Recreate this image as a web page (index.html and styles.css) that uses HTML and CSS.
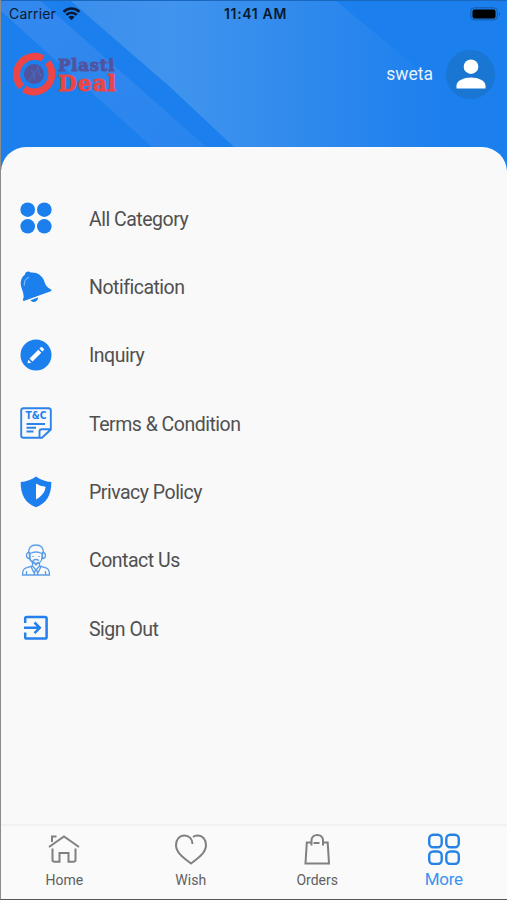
FILE: index.html
```html
<!DOCTYPE html>
<html lang="en">
<head>
  <meta charset="UTF-8">
  <meta name="viewport" content="width=device-width, initial-scale=1.0">
  <title>Plasti Deal</title>
  <link rel="stylesheet" href="styles.css">
</head>
<body>
  <div class="phone">
    <header class="header">
      <svg class="header-bg" viewBox="0 0 507 170" preserveAspectRatio="none">
        <defs>
          <linearGradient id="band" x1="0" y1="0" x2="1" y2="0.8">
            <stop offset="0" stop-color="#3489ee"/>
            <stop offset="1" stop-color="#2885ee"/>
          </linearGradient>
          <linearGradient id="sheen" gradientUnits="userSpaceOnUse" x1="80" y1="0" x2="450" y2="0">
            <stop offset="0" stop-color="#3c90ed"/>
            <stop offset="0.25" stop-color="#4094ed"/>
            <stop offset="0.7" stop-color="#2b87ed"/>
            <stop offset="1" stop-color="#1b7fee"/>
          </linearGradient>
        </defs>
        <path d="M0 0H40L224 163L207 170H177L0 10z" fill="url(#band)"/>
        <path d="M70 0H336L432 80L507 145V170H258L170 87z" fill="url(#sheen)"/>
      </svg>

      <div class="status-bar">
        <div class="carrier">
          <span>Carrier</span>
          <svg width="19" height="14" viewBox="0 0 19 14">
            <path d="M1.600 4.800a11.200 11.200 0 0 1 15.800 0M4.300 7.900a7.300 7.300 0 0 1 10.400 0" fill="none" stroke="#0a1a30" stroke-width="2.600"/>
            <path d="M6.400 10.100a4.400 4.400 0 0 1 6.200 0L9.500 13.300z" fill="#0a1a30"/>
          </svg>
        </div>
        <span class="clock">11:41 AM</span>
        <svg class="battery" width="32" height="14" viewBox="0 0 32 14">
          <rect x=".8" y=".8" width="26.500" height="12" rx="3.500" fill="none" stroke="#1759a4"/>
          <rect x="2.500" y="2.500" width="23" height="9" rx="2" fill="#000"/>
          <path d="M29 5v4q2-2 0-4" fill="#1759a4"/>
        </svg>
      </div>

      <div class="top-row">
        <div class="logo">
          <svg width="44" height="44" viewBox="0 0 44 44">
            <g fill="none" stroke="#ed4546" stroke-width="7">
              <path d="M31 6.500A18 18 0 0 0 9.500 34.800"/>
              <path d="M12 37A18 18 0 0 0 35.500 10.200"/>
            </g>
            <circle cx="22" cy="22" r="10" fill="#51539f"/>
            <path d="M17 29l6-9 3-5 1 6 3 3M19 18l4 4-1 7" fill="none" stroke="#4a68b4" stroke-width="1.300"/>
          </svg>
          <div class="logo-text">
            <span class="logo-plasti">Plasti</span>
            <span class="logo-deal">Deal</span>
          </div>
        </div>
        <div class="user">
          <span>sweta</span>
          <div class="avatar">
            <svg width="30" height="30" viewBox="0 0 30 30" fill="#fff">
              <circle cx="15" cy="7.700" r="7.300"/>
              <path d="M.5 29.500V26.500C.5 21.500 8 18.500 15 18.500S29.500 21.500 29.500 26.500V29.500z"/>
            </svg>
          </div>
        </div>
      </div>
    </header>

    <main class="sheet">
      <ul class="menu">
        <li class="menu-item">
          <svg class="menu-icon" viewBox="0 0 32 32">
            <circle cx="7.700" cy="7.700" r="7.300"/><circle cx="24.300" cy="7.700" r="7.300"/>
            <circle cx="7.700" cy="24.300" r="7.300"/><circle cx="24.300" cy="24.300" r="7.300"/>
          </svg>
          <span>All Category</span>
        </li>
        <li class="menu-item">
          <svg class="menu-icon" viewBox="0 0 32 32">
            <path d="M5 3.500C5 1 8.500-.5 10.700 1.600C17 1 22 4.500 24 9.500C25.500 13.500 26 16 31 18.500C31.800 19 31.500 20 30.800 20.300L4.500 29.800C3 30.200 2.500 29 3.200 27.800C5 23 1 18 .7 13C.5 9 2 5.800 5 3.500z"/>
            <path d="M10.500 29.300L18 26.500C18.500 30 13 33 10.500 29.300z"/>
            <path d="M4.300 14.500C3.900 10.500 5.500 7.500 9 6.300" fill="none" stroke="#a9cff8" stroke-width=".9"/>
          </svg>
          <span>Notification</span>
        </li>
        <li class="menu-item">
          <svg class="menu-icon" viewBox="0 0 32 32">
            <circle cx="16" cy="16" r="15.500"/>
            <path d="M8.300 20.700L11.300 23.700L8 24.300Q7.300 24.300 7.600 23.500zM9.500 19.500L18.300 10.700L21.300 13.700L12.500 22.500zM19.400 9.600L20.800 8.200Q21.500 7.700 22.200 8.300L23.700 9.800Q24.200 10.500 23.700 11.300L22.400 12.600z" fill="#fff"/>
          </svg>
          <span>Inquiry</span>
        </li>
        <li class="menu-item">
          <svg class="menu-icon" viewBox="0 0 32 32">
            <path d="M19.500 30.800H3.500Q1.200 30.800 1.200 28.500V3.500Q1.200 1.200 3.500 1.200H28.500Q30.800 1.200 30.800 3.500V22.500L22 30.800H19.500V24.500Q19.500 22.300 22 22.300H30.500M6.500 17H25M6.500 20.800H16M6.500 24.500H13.500" fill="none" stroke="#2c83e9" stroke-width="1.900"/>
            <text x="5.500" y="12.300" textLength="21" lengthAdjust="spacingAndGlyphs" class="tc-text">T&amp;C</text>
          </svg>
          <span>Terms &amp; Condition</span>
        </li>
        <li class="menu-item">
          <svg class="menu-icon" viewBox="0 0 32 32">
            <path d="M16 .6C20.500 4 25.500 5.700 31.300 6C31.500 18.500 27 27 16 31.300C5 27 .5 18.500.7 6C6.500 5.700 11.500 4 16 .6z"/>
            <path d="M16 7.600C19 9.600 22 10.400 25.600 10.800C25 16.500 21.500 20.500 16 23.500z" fill="#fff"/>
          </svg>
          <span>Privacy Policy</span>
        </li>
        <li class="menu-item">
          <svg class="menu-icon" viewBox="0 0 32 32">
            <g fill="none" stroke="#5a9de9" stroke-width="1.300">
              <path d="M8.500 9C8.500 3.500 11.500 1 16 1S23.500 3.500 23.500 9M10 9.500Q16 6.500 22 9.500V13C22 17 19.500 19.500 16 19.500S10 17 10 13z"/>
              <path d="M9.500 8.500C5.500 8.500 5.500 14.500 9.500 14.500zM22.500 8.500C26.500 8.500 26.500 14.500 22.500 14.500zM9 14.500Q10.500 17.500 14 17.500"/>
              <path d="M12.500 19V22L6 23.800C3.500 24.500 2.500 27 2.500 31H29.500C29.500 27 28.500 24.500 26 23.800L19.500 22V19M12.500 22L16 26L19.500 22M11 22.500L13.500 28L16 26L18.500 28L21 22.500M15 27L14 31M17 27L18 31M6.500 27V31M25.500 27V31"/>
              <path d="M13 16.500Q16 14.500 19 16.500M13.500 18L16 21L18.500 18M13 12V13M19 12V13"/>
            </g>
          </svg>
          <span>Contact Us</span>
        </li>
        <li class="menu-item">
          <svg class="menu-icon" viewBox="0 0 32 32">
            <path d="M5.200 11V6.500Q5.200 5 6.800 5H25Q26.600 5 26.600 6.500V25Q26.600 26.600 25 26.600H6.800Q5.200 26.600 5.200 25V20.500M4 15.800H19M14.500 10.500L19.800 15.800L14.500 21.100" fill="none" stroke="#2680eb" stroke-width="2.500"/>
          </svg>
          <span>Sign Out</span>
        </li>
      </ul>
    </main>

    <nav class="tab-bar">
      <a class="tab">
        <svg width="32" height="32" viewBox="0 0 32 32">
          <path d="M1 14L16 3.500L31 14M4 9V3.500H8.500M4.500 15.500V27Q4.500 28.800 6.500 28.800H11.500V20H20.500V28.800H25.500Q27.500 28.800 27.500 27V15.500"/>
        </svg>
        <span>Home</span>
      </a>
      <a class="tab">
        <svg width="32" height="32" viewBox="0 0 32 32">
          <path d="M17.500 11C17.500 6 14 2.500 9.500 2.500C4.500 2.500 1 6.500 1 12C1 19 7 24 16 30.500C25 24 31 19 31 12C31 6.500 27.500 2.500 22.500 2.500Q19.800 2.500 18 4"/>
        </svg>
        <span>Wish</span>
      </a>
      <a class="tab">
        <svg width="32" height="32" viewBox="0 0 32 32">
          <path d="M10.500 9.500H5.800L4.500 30.500H28L26.700 9.500H22V7.500C22 0 10.500 0 10.500 7.500V12.500M22 9.500V12.500M12.500 10H18.500"/>
        </svg>
        <span>Orders</span>
      </a>
      <a class="tab active">
        <svg width="32" height="32" viewBox="0 0 32 32">
          <rect x="1.200" y="1.700" width="12.500" height="12.500" rx="4"/><rect x="18.300" y="1.700" width="12.500" height="12.500" rx="4"/>
          <rect x="1.200" y="18.500" width="12.500" height="12.500" rx="4"/><rect x="18.300" y="18.500" width="12.500" height="12.500" rx="4"/>
        </svg>
        <span>More</span>
      </a>
    </nav>
  </div>
</body>
</html>
```
FILE: styles.css
```css
* {
  box-sizing: border-box;
}

body {
  margin: 0;
  font-family: Roboto, "Noto Sans", sans-serif;
  color: #505050;
}

.phone {
  display: flex;
  flex-direction: column;
  height: 900px;
  background: #fafafa;
  border-left: 1px solid #8c8c8c;
  border-bottom: 1px solid #555;
  overflow: hidden;
}

.header {
  position: relative;
  height: 170px;
  flex-shrink: 0;
  background: #1b7fee;
  border-top: 1px solid #1a68be;
}

.header-bg {
  position: absolute;
  inset: 0;
  width: 100%;
  height: 100%;
}

.status-bar {
  position: relative;
  display: grid;
  grid-template-columns: 1fr auto 1fr;
  align-items: center;
  height: 25px;
  padding: 0 5px 0 8px;
  font-family: Inter, sans-serif;
  font-size: 14px;
  color: #0a1a30;
}

.carrier {
  display: flex;
  align-items: center;
  gap: 6px;
  letter-spacing: 0.15px;
}

.clock {
  font-weight: 600;
  font-size: 14px;
  letter-spacing: 0.65px;
}

.battery {
  justify-self: end;
}

.top-row {
  position: relative;
  display: flex;
  justify-content: space-between;
  align-items: center;
  height: 50px;
  margin-top: 23px;
  padding: 0 12px 0 11px;
}

.logo {
  display: flex;
  align-items: center;
  gap: 2px;
}

.logo-text {
  display: flex;
  flex-direction: column;
  font-family: "DejaVu Serif", serif;
  font-weight: bold;
  -webkit-text-stroke: 0.9px;
}

.logo-plasti {
  color: #51539f;
  font-size: 16.5px;
  line-height: 18px;
  letter-spacing: 0.8px;
}

.logo-deal {
  color: #ed4546;
  font-size: 21.5px;
  line-height: 17px;
  letter-spacing: 1.2px;
}

.user {
  display: flex;
  align-items: center;
  gap: 13px;
  color: #e8f2fe;
  font-size: 17.5px;
}

.avatar {
  display: flex;
  align-items: center;
  justify-content: center;
  width: 49px;
  height: 49px;
  border-radius: 50%;
  background: #1976d2;
}

.sheet {
  position: relative;
  flex: 1;
  margin-top: -23px;
  padding-top: 37px;
  background: #f9f9f9;
  border-radius: 25px 25px 0 0;
}

.menu {
  margin: 0;
  padding: 0;
  list-style: none;
}

.menu-item {
  display: flex;
  align-items: center;
  gap: 37px;
  height: 68.35px;
  padding-left: 19px;
  font-size: 19.5px;
  letter-spacing: -0.5px;
  white-space: nowrap;
}

.menu-item span {
  padding-top: 2px;
}

.menu-icon {
  width: 32px;
  height: 32px;
  flex-shrink: 0;
  fill: #1b7fee;
}

.tc-text {
  font-family: "DejaVu Sans", sans-serif;
  font-size: 10px;
  font-weight: bold;
  letter-spacing: 0;
}

.tab-bar {
  display: grid;
  grid-template-columns: repeat(4, 1fr);
  height: 75px;
  border-top: 2px solid #f1f1f1;
  background: #fafafa;
}

.tab {
  display: flex;
  flex-direction: column;
  align-items: center;
  padding-top: 7px;
  font-size: 14px;
  line-height: 31px;
  color: #606060;
}

.tab svg {
  fill: none;
  stroke: #808080;
  stroke-width: 2;
}

.tab.active {
  color: #3c92ee;
  font-size: 17px;
  line-height: 28px;
  letter-spacing: -0.3px;
}

.tab.active svg {
  stroke: #2683e6;
  stroke-width: 2.4;
}
```
